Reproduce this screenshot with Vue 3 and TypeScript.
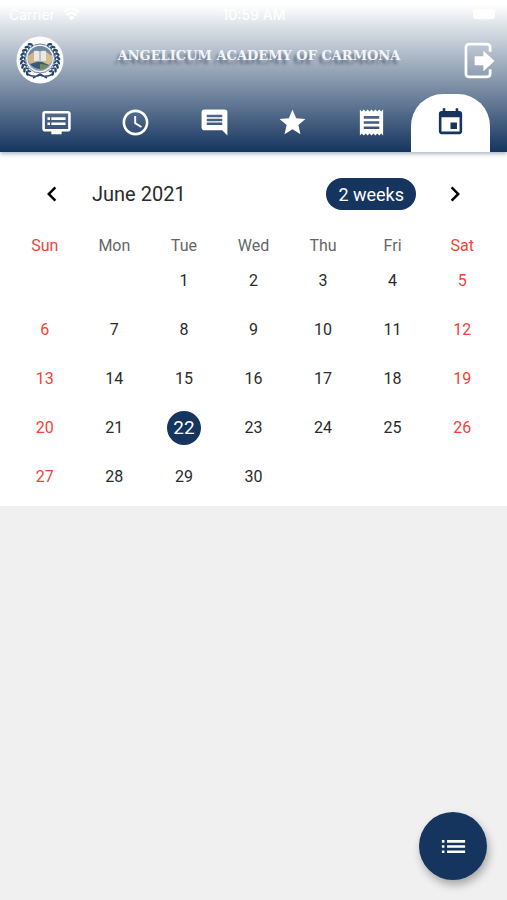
<script setup lang="ts">
import { ref } from 'vue'

interface Tab {
  label: string
  path: string
}

const tabs: Tab[] = [
  { label: 'Feed', path: 'M21 3H3c-1.1 0-2 .9-2 2v12c0 1.1.9 2 2 2h5v2h8v-2h5c1.1 0 1.99-.9 1.99-2L23 5c0-1.1-.9-2-2-2zm0 14H3V5h18v12zm-2-9H8v2h11V8zm0 4H8v2h11v-2zM7 8H5v2h2V8zm0 4H5v2h2v-2z' },
  { label: 'Schedule', path: 'M11.99 2C6.47 2 2 6.48 2 12s4.47 10 9.99 10C17.52 22 22 17.52 22 12S17.52 2 11.99 2zM12 20c-4.42 0-8-3.58-8-8s3.58-8 8-8 8 3.58 8 8-3.58 8-8 8zm.5-13H11v6l5.25 3.15.75-1.23-4.5-2.67z' },
  { label: 'Messages', path: 'M21.99 4c0-1.1-.89-2-1.99-2H4c-1.1 0-2 .9-2 2v12c0 1.1.9 2 2 2h14l4 4-.01-18zM18 14H6v-2h12v2zm0-3H6V9h12v2zm0-3H6V6h12v2z' },
  { label: 'Grades', path: 'M12 17.27L18.18 21l-1.64-7.03L22 9.24l-7.19-.61L12 2 9.19 8.63 2 9.24l5.46 4.73L5.82 21z' },
  { label: 'Receipts', path: 'M18 17H6v-2h12v2zm0-4H6v-2h12v2zm0-4H6V7h12v2zM3 22l1.5-1.5L6 22l1.5-1.5L9 22l1.5-1.5L12 22l1.5-1.5L15 22l1.5-1.5L18 22l1.5-1.5L21 22V2l-1.5 1.5L18 2l-1.5 1.5L15 2l-1.5 1.5L12 2l-1.5 1.5L9 2 7.5 3.5 6 2 4.5 3.5 3 2v20z' },
  { label: 'Calendar', path: 'M17 12h-5v5h5v-5zM16 1v2H8V1H6v2H5c-1.11 0-1.99.9-1.99 2L3 19c0 1.1.89 2 2 2h14c1.1 0 2-.9 2-2V5c0-1.1-.9-2-2-2h-1V1h-2zm3 18H5V8h14v11z' },
]
const activeTab = ref('Calendar')

const weekdays = ['Sun', 'Mon', 'Tue', 'Wed', 'Thu', 'Fri', 'Sat']
const firstWeekday = 2
const daysInMonth = 30
const selected = ref(22)

const weeks: (number | null)[][] = Array.from({ length: 5 }, (_, w) =>
  Array.from({ length: 7 }, (_, d) => {
    const day = w * 7 + d - firstWeekday + 1
    return day >= 1 && day <= daysInMonth ? day : null
  }),
)

const isWeekend = (column: number): boolean => column === 0 || column === 6

const leaves = Array.from({ length: 9 }, (_, i) => i)
</script>

<template>
  <div class="screen">
    <header class="header">
      <div class="status">
        <span class="carrier">
          Carrier
          <svg class="wifi" viewBox="0 0 24 20" aria-hidden="true">
            <path d="M1 7a16 16 0 0 1 22 0M5 11.500a10 10 0 0 1 14 0" fill="none" stroke="currentColor" stroke-width="3.400" />
            <path d="M8 14.500a6 6 0 0 1 8 0L12 19z" fill="currentColor" />
          </svg>
        </span>
        <span class="time">10:59 AM</span>
        <span class="battery"></span>
      </div>

      <div class="brand">
        <svg class="logo" viewBox="0 0 48 48" aria-hidden="true">
          <circle cx="24" cy="24" r="23.500" fill="#fff" />
          <g fill="#27456f">
            <g v-for="i in leaves" :key="i">
              <ellipse cx="5.500" cy="24" rx="1.300" ry="2.600" :transform="`rotate(${i * 13 - 46} 24 24) rotate(35 5.500 24)`" />
              <ellipse cx="8.500" cy="24" rx="1" ry="2.200" :transform="`rotate(${i * 13 - 46} 24 24) rotate(-35 8.500 24)`" />
              <ellipse cx="42.500" cy="24" rx="1.300" ry="2.600" :transform="`rotate(${46 - i * 13} 24 24) rotate(-35 42.500 24)`" />
              <ellipse cx="39.500" cy="24" rx="1" ry="2.200" :transform="`rotate(${46 - i * 13} 24 24) rotate(35 39.500 24)`" />
            </g>
          </g>
          <circle cx="24" cy="22.500" r="14.500" fill="#eef2f5" stroke="#7186a0" />
          <circle cx="24" cy="22.500" r="12.500" fill="#92a3ad" />
          <path d="M12 19a12.500 12.500 0 0 1 24 0l-4 1-3-5H19l-3 5z" fill="#7088a0" />
          <path d="M12 20l7-5 4 3v9l-6 4-5-6z" fill="#d1b58a" />
          <path d="M36 20l-7-5-4 3v9l6 4 5-6z" fill="#d8be94" />
          <path d="M14 28l10-3 9 4a12.500 12.500 0 0 1-19-1z" fill="#345b7c" />
          <path d="M24 28l8 1-4 4-4 1z" fill="#75895d" />
          <path d="M18 15q4-1 6 1 2-2 6-1v10q-4-1-6 1-2-2-6-1z" fill="#e8e9e4" />
          <path d="M24 16v10" stroke="#96a4ae" fill="none" />
          <path d="M11 38q7 4 13 1 6 3 13-1M17 42l7-4 7 4" stroke="#27456f" stroke-width="1.500" fill="none" />
        </svg>
        <h1 class="title">ANGELICUM ACADEMY OF CARMONA</h1>
        <button class="logout" type="button" aria-label="Log out">
          <svg viewBox="0 0 32 38" aria-hidden="true">
            <path d="M27 10V5.500Q27 2 23.500 2H5.500Q2 2 2 5.500v27Q2 36 5.500 36h18Q27 36 27 32.500V28" fill="none" stroke="currentColor" stroke-width="2.800" />
            <path d="M11 14.500h9V9l11.500 10.500L20 30v-6h-9z" fill="currentColor" />
          </svg>
        </button>
      </div>

      <nav class="tabs">
        <button
          v-for="tab in tabs"
          :key="tab.label"
          type="button"
          class="tab"
          :class="{ active: tab.label === activeTab }"
          :aria-label="tab.label"
          @click="activeTab = tab.label"
        >
          <svg class="icon" viewBox="0 0 24 24" aria-hidden="true"><path :d="tab.path" /></svg>
        </button>
      </nav>
    </header>

    <main class="calendar">
      <div class="toolbar">
        <button class="arrow" type="button" aria-label="Previous month">
          <svg viewBox="0 0 24 24" aria-hidden="true"><path d="M15.410 7.410L14 6l-6 6 6 6 1.410-1.410L10.830 12z" /></svg>
        </button>
        <h2 class="month">June 2021</h2>
        <button class="format" type="button">2 weeks</button>
        <button class="arrow" type="button" aria-label="Next month">
          <svg viewBox="0 0 24 24" aria-hidden="true"><path d="M10 6L8.590 7.410 13.170 12l-4.580 4.590L10 18l6-6z" /></svg>
        </button>
      </div>

      <table class="grid">
        <thead>
          <tr>
            <th v-for="(name, column) in weekdays" :key="name" scope="col" :class="{ weekend: isWeekend(column) }">{{ name }}</th>
          </tr>
        </thead>
        <tbody>
          <tr v-for="(week, row) in weeks" :key="row">
            <td v-for="(day, column) in week" :key="column">
              <button
                v-if="day"
                type="button"
                class="day"
                :class="{ weekend: isWeekend(column), selected: day === selected }"
                @click="selected = day"
              >{{ day }}</button>
            </td>
          </tr>
        </tbody>
      </table>
    </main>

    <button class="fab" type="button" aria-label="Event list">
      <svg class="icon" viewBox="0 0 24 24" aria-hidden="true">
        <path d="M3 13h2v-2H3v2zm0 4h2v-2H3v2zm0-8h2V7H3v2zm4 4h14v-2H7v2zm0 4h14v-2H7v2zM7 7v2h14V7H7z" />
      </svg>
    </button>
  </div>
</template>

<style>
body {
  margin: 0;
  background: #f0f0f0;
}
</style>

<style scoped>
.screen {
  min-height: 100vh;
  background: #f0f0f0;
  color: #2b2b2b;
  font-family: Roboto, "Liberation Sans", sans-serif;
}

button {
  display: flex;
  align-items: center;
  justify-content: center;
  margin: 0;
  padding: 0;
  border: 0;
  background: none;
  color: inherit;
  font: inherit;
  cursor: pointer;
}

svg {
  display: block;
  fill: currentColor;
}

.header {
  position: relative;
  background: linear-gradient(#fff 3%, #15355f);
  box-shadow: 0 2px 4px rgba(20, 50, 90, 0.35);
  color: #fff;
}

.status {
  display: grid;
  grid-template-columns: 1fr auto 1fr;
  align-items: center;
  height: 28px;
  padding: 0 12px 0 9px;
  font-family: Inter, sans-serif;
  font-size: 14px;
}

.carrier {
  display: flex;
  align-items: center;
  gap: 8px;
}

.wifi {
  width: 17px;
  height: 14px;
}

.time {
  padding-left: 4px;
  font-weight: 500;
}

.battery {
  justify-self: end;
  width: 22px;
  height: 10px;
  border-radius: 3px;
  background: #fff;
}

.brand {
  display: flex;
  align-items: center;
  height: 64px;
  padding: 0 12px 2px 16px;
}

.logo {
  width: 48px;
  height: 48px;
}

.title {
  flex: 1;
  margin: 0;
  padding: 0 10px 8px 0;
  color: #f2f6fb;
  font-family: "DejaVu Serif", serif;
  font-size: 13px;
  font-weight: 700;
  line-height: 20px;
  text-align: center;
  white-space: nowrap;
  text-shadow: -3px 4px 3px rgba(40, 50, 70, 0.5);
}

.logout svg {
  width: 31px;
  height: 37px;
}

.tabs {
  display: grid;
  grid-template-columns: repeat(6, 1fr);
  padding: 0 17px;
}

.tab {
  height: 58px;
  padding-bottom: 2px;
}

.icon {
  width: 31px;
  height: 31px;
}

.tab.active {
  border-radius: 32px 32px 0 0;
  background: #fff;
  color: #15355f;
}

.calendar {
  padding: 16px 10px 5px;
  background: #fff;
}

.toolbar {
  display: flex;
  align-items: center;
  height: 52px;
  padding: 0 30px;
}

.arrow {
  width: 24px;
  height: 32px;
  color: #000;
}

.arrow svg {
  flex: none;
  width: 30px;
  height: 30px;
}

.month {
  flex: 1;
  margin: 0;
  padding-left: 28px;
  font-size: 20px;
  font-weight: 400;
  line-height: 24px;
}

.format {
  height: 32px;
  margin-right: 27px;
  padding: 0 12px;
  border-radius: 16px;
  background: #15355f;
  color: #fff;
  font-size: 18px;
}

.grid {
  width: 100%;
  border-collapse: collapse;
  table-layout: fixed;
  font-size: 16px;
}

th {
  height: 20px;
  padding: 16px 0 0;
  color: #666;
  font-weight: 400;
  line-height: 20px;
}

td {
  height: 49px;
  padding: 0;
}

.day {
  width: 34px;
  height: 34px;
  margin: 0 auto;
  border-radius: 50%;
}

.weekend {
  color: #f04438;
}

.day.selected {
  background: #15355f;
  color: #fff;
  font-size: 19px;
}

.fab {
  position: fixed;
  right: 20px;
  bottom: 20px;
  width: 68px;
  height: 68px;
  border-radius: 50%;
  background: #15355f;
  box-shadow: 2px 5px 9px rgba(0, 0, 0, 0.3);
  color: #fff;
}
</style>
